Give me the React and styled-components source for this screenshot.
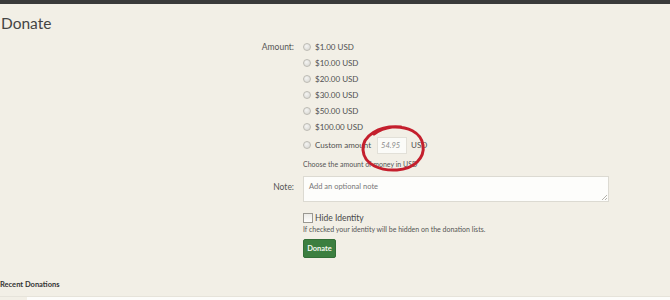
import styled, { createGlobalStyle } from "styled-components";

const GlobalStyle = createGlobalStyle`
  html, body {
    margin: 0;
    padding: 0;
    background: #f2efe6;
  }
  body {
    font-family: "Lato", "Liberation Sans", sans-serif;
    color: #4a4a4a;
  }
`;

const Page = styled.div`
  width: 670px;
  height: 300px;
  overflow: hidden;
  background: #f2efe6;
`;

const TopBar = styled.div`
  height: 4px;
  background: #3a3a3a;
`;

const Title = styled.h1`
  margin: 0;
  padding: 3px 0 0 1px;
  font-size: 15.5px;
  font-weight: 400;
  line-height: 32px;
  color: #444;
`;

const Form = styled.div`
  display: grid;
  grid-template-columns: 294px 1fr;
  column-gap: 9px;
`;

const Label = styled.div`
  text-align: right;
  font-size: 8.5px;
  color: #555;
  line-height: ${(p) => p.$lh || 16}px;
  padding-top: ${(p) => p.$top || 0}px;
`;

const Controls = styled.div`
  display: flex;
  flex-direction: column;
  margin-top: ${(p) => p.$top || 0}px;
`;

const OptionRow = styled.label`
  display: flex;
  align-items: center;
  gap: 4px;
  height: ${(p) => p.$h || 16}px;
  font-size: 8px;
  color: #505050;
  position: relative;
`;

const Radio = styled.span`
  width: 8px;
  height: 8px;
  border-radius: 50%;
  border: 1px solid #bdbbb4;
  background: radial-gradient(circle at 40% 35%, #f4f4f2, #d6d5d0);
  box-sizing: border-box;
  flex: none;
`;

const AmountInput = styled.div`
  width: 30px;
  height: 17px;
  box-sizing: border-box;
  margin-left: 2px;
  border: 1px solid #e2e0d8;
  background: #fbfbf8;
  font-size: 7.5px;
  font-style: italic;
  color: #8a8a8a;
  padding-left: 3px;
  display: flex;
  align-items: center;
`;

const Circle = styled.svg`
  position: absolute;
  left: 56px;
  top: -12px;
  pointer-events: none;
`;

const Hint = styled.div`
  font-size: 7px;
  line-height: 10px;
  color: #555;
  margin-top: ${(p) => p.$top || 0}px;
`;

const NoteWrap = styled.div`
  position: relative;
  width: 306px;
  height: 26px;

  &::after {
    content: "";
    position: absolute;
    right: 2px;
    bottom: 2px;
    width: 5px;
    height: 5px;
    background: linear-gradient(135deg, transparent 45%, #b5b3ac 45%, #b5b3ac 55%, transparent 55%, transparent 70%, #b5b3ac 70%, #b5b3ac 80%, transparent 80%);
  }
`;

const NoteBox = styled.textarea`
  display: block;
  width: 100%;
  height: 100%;
  box-sizing: border-box;
  border: 1px solid #dcdad2;
  background: #fdfdfb;
  font-family: "Lato", "Liberation Sans", sans-serif;
  font-size: 7.5px;
  padding: 5px 5px;
  margin: 0;
  color: #444;
  resize: none;
  outline: none;

  &::placeholder {
    color: #777;
  }
`;

const CheckRow = styled.label`
  display: flex;
  align-items: center;
  gap: 2px;
  height: 11px;
  font-size: 8.5px;
  color: #484848;
  margin-top: 10px;
`;

const Box = styled.span`
  width: 10px;
  height: 10px;
  box-sizing: border-box;
  border: 1px solid #9a9892;
  background: linear-gradient(#ecebe7, #fdfdfc);
  flex: none;
`;

const Button = styled.button`
  align-self: flex-start;
  margin-top: 5px;
  width: 33px;
  height: 19px;
  padding: 0;
  border: 1px solid #336f37;
  border-radius: 2px;
  background: #3c7f40;
  color: #f4f8f2;
  font-family: "Lato", "Liberation Sans", sans-serif;
  font-weight: 700;
  font-size: 7.5px;
`;

const Section = styled.div`
  margin-top: 21px;
`;

const SectionTitle = styled.div`
  font-size: 7.5px;
  font-weight: 700;
  color: #333;
  line-height: 12px;
  padding-bottom: 5px;
  border-bottom: 1px solid #e6e3da;
`;

const Table = styled.div`
  margin-left: 27px;
  height: 40px;
  background: #fdfdfb;
`;

const amounts = ["$1.00 USD", "$10.00 USD", "$20.00 USD", "$30.00 USD", "$50.00 USD", "$100.00 USD"];

export default function App() {
  return (
    <Page>
      <GlobalStyle />
      <TopBar />
      <Title>Donate</Title>
      <Form>
        <Label>Amount:</Label>
        <Controls>
          {amounts.map((a) => (
            <OptionRow key={a}>
              <Radio />
              {a}
            </OptionRow>
          ))}
          <OptionRow $h={20}>
            <Radio />
            Custom amount
            <AmountInput>54.95</AmountInput>
            USD
            <Circle width="68" height="50" viewBox="0 0 68 50">
              <path
                d="M42 4 C20 2 3 13 4 27 C5 42 22 48 38 47 C55 46 66 35 64 22 C62 9 48 3 33 4 C25 5 19 8 15 11"
                fill="none"
                stroke="#c41f2d"
                strokeWidth="3"
                strokeLinecap="round"
              />
            </Circle>
          </OptionRow>
          <Hint $top={4}>Choose the amount of money in USD</Hint>
        </Controls>

        <Label $top={13} $lh={10}>
          Note:
        </Label>
        <Controls $top={7}>
          <NoteWrap>
            <NoteBox placeholder="Add an optional note" />
          </NoteWrap>
          <CheckRow>
            <Box />
            Hide Identity
          </CheckRow>
          <Hint $top={1}>If checked your identity will be hidden on the donation lists.</Hint>
          <Button>Donate</Button>
        </Controls>
      </Form>
      <Section>
        <SectionTitle>Recent Donations</SectionTitle>
        <Table />
      </Section>
    </Page>
  );
}
